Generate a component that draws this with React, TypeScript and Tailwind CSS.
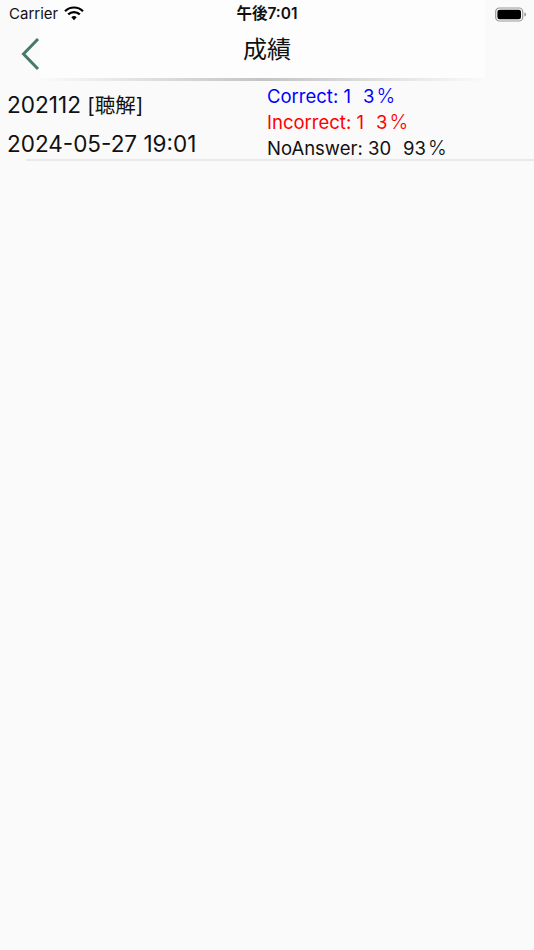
function Row({ color, label, n, pct }: { color: string; label: string; n: string; pct: string }) {
  return (
    <div className={`flex ${color}`}>
      <span>{label} {n}</span>
      <span className="ml-[12px]">{pct}</span>
      <span className="ml-[2px] text-[20px] font-light">%</span>
    </div>
  );
}

export default function App() {
  const jp = { fontFamily: '"Inter", "Liberation Sans", "Noto Sans CJK JP", sans-serif' };
  return (
    <div className="relative w-[534px] h-[950px] overflow-hidden bg-[#fafafa] text-black" style={jp}>
      <div className="absolute left-[40px] top-0 w-[445px] h-[79px] bg-[#fdfdfd]" />
      <div className="absolute left-[40px] top-[78px] w-[445px] h-[3px] bg-gradient-to-r from-[#fafafa] via-[#c4c4c4] to-[#fafafa]" />
      <div className="relative">
        <div className="h-[28px] flex items-center justify-between">
          <div className="flex items-center w-[120px]">
            <span className="ml-[9px] text-[15px] leading-[28px] text-[#111]">Carrier</span>
            <svg className="ml-[6px] -mt-[2px]" width="20" height="15" viewBox="0 0 20 15">
              <path d="M1 5.2a12.8 12.8 0 0 1 18 0" fill="none" stroke="#000" strokeWidth="2.2" />
              <path d="M4.2 8.4a8.3 8.3 0 0 1 11.6 0" fill="none" stroke="#000" strokeWidth="2.2" />
              <path d="M7.3 11.3a4 4 0 0 1 5.4 0L10 14.2z" fill="#000" />
            </svg>
          </div>
          <span className="text-[15.5px] font-semibold leading-[28px] text-[#111]">午後7:01</span>
          <div className="w-[120px] flex justify-end pr-[7px]">
            <svg width="32" height="15" viewBox="0 0 32 15">
              <rect x="0.7" y="1" width="27" height="13" rx="3.6" fill="none" stroke="#999" strokeWidth="1.2" />
              <rect x="2.4" y="2.7" width="23.6" height="9.6" rx="2.2" fill="#000" />
              <path d="M29.3 5.4c1.2.3 1.8 1.1 1.8 2.1s-.6 1.8-1.8 2.1z" fill="#999" />
            </svg>
          </div>
        </div>
        <div className="h-[52px] relative flex justify-center">
          <span className="text-[24px] leading-[44px] text-[#111]">成績</span>
          <svg className="absolute left-[20px] top-[9px]" width="22" height="34" viewBox="0 0 22 34">
            <path d="M18 2 L3.5 17 L18 32" fill="none" stroke="#457a69" strokeWidth="3" />
          </svg>
        </div>
        <div className="relative h-[81px] flex">
          <div className="w-[267px] pl-[7px]">
            <div className="text-[22.6px] leading-[26px] mt-[12px] text-[#111] whitespace-nowrap">202112 <span className="text-[20.5px]">[聴解]</span></div>
            <div className="text-[22.5px] leading-[28px] mt-[11px] text-[#111] whitespace-nowrap">2024-05-27 19:01</div>
          </div>
          <div className="flex flex-col text-[18.5px] leading-[26px] pt-[3px] whitespace-nowrap">
            <Row color="text-[#0000ff]" label="Correct:" n="1" pct="3" />
            <Row color="text-[#ff0000]" label="Incorrect:" n="1" pct="3" />
            <Row color="text-[#111]" label="NoAnswer:" n="30" pct="93" />
          </div>
          <div className="absolute left-[26px] right-0 top-[79px] h-[2px] bg-[#e9e9e9]" />
        </div>
      </div>
    </div>
  );
}
